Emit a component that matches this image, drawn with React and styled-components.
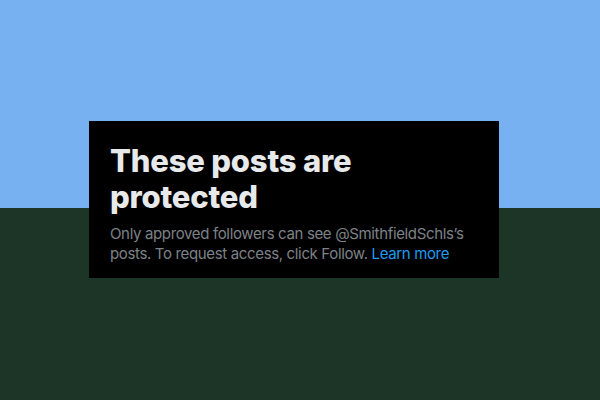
import React from "react";
import styled, { createGlobalStyle } from "styled-components";

const Global = createGlobalStyle`
  html, body { margin: 0; padding: 0; }
  body { width: 600px; height: 400px; overflow: hidden; }
`;

const Scene = styled.div`
  position: relative;
  width: 600px;
  height: 400px;
  display: flex;
  flex-direction: column;
`;

const Sky = styled.div`
  height: 208px;
  background: #78b1f2;
`;

const Ground = styled.div`
  flex: 1;
  background: #1d3527;
`;

/* Protected-account notice laid over the banner */
const Notice = styled.div`
  position: absolute;
  left: 89px;
  top: 121px;
  width: 410px;
  height: 157px;
  box-sizing: border-box;
  padding: 22px 16px 0 21px;
  background: #000;
  font-family: Inter, "Liberation Sans", sans-serif;
`;

const Title = styled.h1`
  margin: 0 0 9px;
  color: #e7e9ea;
  font-size: 31px;
  line-height: 36px;
  font-weight: 800;
  letter-spacing: -0.2px;
`;

const Body = styled.p`
  margin: 0;
  color: #7d8287;
  font-size: 15px;
  line-height: 20px;
  letter-spacing: -0.35px;
`;

const Link = styled.a`
  color: #1d9bf0;
  text-decoration: none;
`;

export default function App() {
  return (
    <>
      <Global />
      <Scene>
        <Sky />
        <Ground />
        <Notice>
          <Title>These posts are protected</Title>
          <Body>
            Only approved followers can see @SmithfieldSchls’s posts. To request access, click Follow.{" "}
            <Link href="#">Learn more</Link>
          </Body>
        </Notice>
      </Scene>
    </>
  );
}
